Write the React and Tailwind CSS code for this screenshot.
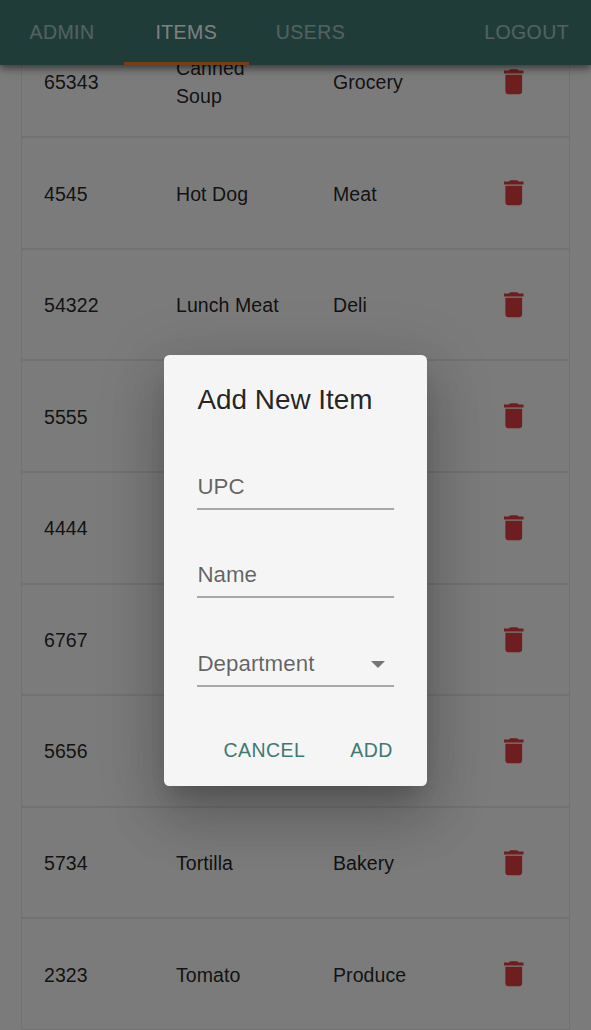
const rows = [
  ["65343", "Canned Soup", "Grocery"],
  ["4545", "Hot Dog", "Meat"],
  ["54322", "Lunch Meat", "Deli"],
  ["5555", "", ""],
  ["4444", "", ""],
  ["6767", "", ""],
  ["5656", "", ""],
  ["5734", "Tortilla", "Bakery"],
  ["2323", "Tomato", "Produce"],
];

function DeleteIcon() {
  return (
    <svg viewBox="0 0 24 24" className="size-[33.5px] fill-[#dd3c3c]">
      <path d="M6 19c0 1.1.9 2 2 2h8c1.1 0 2-.9 2-2V7H6v12zM19 4h-3.5l-1-1h-5l-1 1H5v2h14V4z" />
    </svg>
  );
}

function Header() {
  return (
    <header className="relative z-10 flex h-[65px] shrink-0 bg-[#3e7973] text-[19.5px] tracking-[0.42px] text-white shadow-[0_3px_6px_-1px_rgba(0,0,0,0.3),0_5px_7px_rgba(0,0,0,0.2),0_1px_14px_rgba(0,0,0,0.16)]">
      <div className="flex w-[124px] items-center justify-center text-white/55">ADMIN</div>
      <div className="flex w-[124.5px] items-center justify-center border-b-[3px] border-[#ee7f2e] pt-[3px]">ITEMS</div>
      <div className="flex w-[124px] items-center justify-center text-white/55">USERS</div>
      <div className="flex flex-1 items-center justify-end pr-[22px] text-white/55">LOGOUT</div>
    </header>
  );
}

function Field({ label, select }) {
  return (
    <div className="flex h-[44.5px] items-center justify-between border-b-2 border-[#a8a8a8] pr-[9px] text-[22.3px] tracking-[0.05px] text-black/60">
      <span>{label}</span>
      {select && (
        <svg viewBox="0 0 14 7" className="mt-0.5 h-[7px] w-[14px] fill-[#757575]">
          <path d="M0 0h14L7 7z" />
        </svg>
      )}
    </div>
  );
}

export default function App() {
  return (
    <div className="relative flex h-[1030px] w-[591px] flex-col overflow-hidden bg-[#f6f6f6] font-['Liberation_Sans',Arial,sans-serif]">
      <Header />
      <main className="-mt-[38.4px] ml-[21px] w-[549px] shrink-0 border-x border-[#e4e4e4] bg-[#f6f6f6]">
        {rows.map(([upc, name, department]) => (
          <div
            key={upc}
            className="grid h-[111.6px] grid-cols-[132px_157px_1fr_111px] items-center border-b-2 border-[#e4e4e4] pl-[22px] text-[19.5px] leading-[28px] tracking-[0.08px] text-black/87"
          >
            <span className="pt-px">{upc}</span>
            <span className="w-[110px] whitespace-pre-line pt-px">{name.replace("Canned ", "Canned\n")}</span>
            <span className="pt-px">{department}</span>
            <span className="flex pl-[39px]"><DeleteIcon /></span>
          </div>
        ))}
      </main>
      <div className="absolute inset-0 z-20 flex items-start bg-black/50 pl-[164.4px] pt-[354.5px]">
        <section className="h-[431px] w-[262.4px] rounded-[5.5px] bg-[#f5f5f5] px-[33px] shadow-[0_15px_21px_-10px_rgba(0,0,0,0.2),0_33px_53px_4px_rgba(0,0,0,0.14),0_13px_64px_11px_rgba(0,0,0,0.12)]">
          <h2 className="pt-[23px] text-[27.9px] leading-[44.6px] tracking-[0px] text-black/87">Add New Item</h2>
          <div className="mt-[43px] flex flex-col gap-[44px]">
            <Field label="UPC" />
            <Field label="Name" />
            <Field label="Department" select />
          </div>
          <div className="mt-[49px] flex justify-end gap-[45px] pr-px text-[19.5px] leading-[28px] tracking-[0.45px] text-[#3e7973]">
            <button>CANCEL</button>
            <button>ADD</button>
          </div>
        </section>
      </div>
    </div>
  );
}
